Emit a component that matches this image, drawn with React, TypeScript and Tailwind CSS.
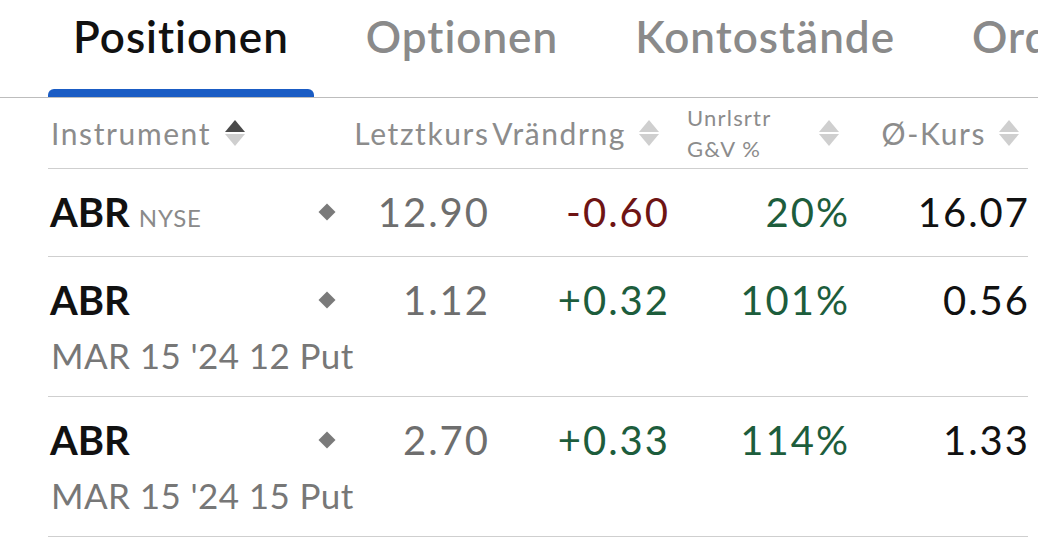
import React from 'react';

type Row = {
  symbol: string;
  exchange?: string;
  detail?: string;
  last: string;
  change: string;
  pnl: string;
  avg: string;
};

const rows: Row[] = [
  { symbol: 'ABR', exchange: 'NYSE', last: '12.90', change: '-0.60', pnl: '20%', avg: '16.07' },
  { symbol: 'ABR', detail: "MAR 15 '24 12 Put", last: '1.12', change: '+0.32', pnl: '101%', avg: '0.56' },
  { symbol: 'ABR', detail: "MAR 15 '24 15 Put", last: '2.70', change: '+0.33', pnl: '114%', avg: '1.33' },
];

const tabs = ['Positionen', 'Optionen', 'Kontostände', 'Orders'];

// Grid: instrument | letztkurs | veränderung | G&V | Ø-Kurs
const cols = 'grid grid-cols-[292px_148px_180px_180px_180px]';

function SortIcon({ active = false }: { active?: boolean }) {
  return (
    <svg width="22" height="30" viewBox="0 0 22 30" className="shrink-0">
      <path d="M11 2 L21 14 L1 14 Z" fill={active ? '#4a4a4a' : '#cfcfcf'} />
      <path d="M1 16 L21 16 L11 28 Z" fill="#cfcfcf" />
    </svg>
  );
}

function Diamond() {
  return <div className="w-[12px] h-[12px] rotate-45 bg-[#7a7a7a]" />;
}

export default function App() {
  return (
    <div className="w-[1038px] h-[548px] bg-white overflow-hidden font-['Lato','Liberation_Sans',sans-serif]">
      {/* tabs */}
      <div className="flex pl-[48px] gap-[27px] whitespace-nowrap border-b border-[#bdbdbd]">
        {tabs.map((t, i) => (
          <div key={t} className="flex flex-col">
            <div
              className={
                'px-[25px] pt-[14px] h-[89px] text-[44px] leading-none font-semibold tracking-[1px] ' +
                (i === 0 ? 'text-[#111]' : 'text-[#8a8a8a]')
              }
            >
              {t}
            </div>
            <div className={'h-[8px] rounded-t-[6px] ' + (i === 0 ? 'bg-[#1a5cc4]' : '')} />
          </div>
        ))}
      </div>

      <div className="pl-[48px] pr-[10px]">
        {/* header */}
        <div className={cols + ' h-[71px] items-center border-b border-[#cfcfcf] text-[30px] tracking-[1.6px] text-[#8c8c8c]'}>
          <div className="flex items-center gap-[13px] pl-[3px]">
            <span>Instrument</span>
            <SortIcon active />
          </div>
          <div className="text-right -mr-[1.6px]">Letztkurs</div>
          <div className="flex items-center justify-end gap-[12px] pr-[8px]">
            <span>Vrändrng</span>
            <SortIcon />
          </div>
          <div className="flex items-center justify-between pl-[19px] pr-[8px]">
            <div className="text-[22px] leading-[31px] tracking-[1.2px]">
              <div>Unrlsrtr</div>
              <div>G&amp;V %</div>
            </div>
            <SortIcon />
          </div>
          <div className="flex items-center justify-end gap-[12px] pr-[8px]">
            <span>Ø-Kurs</span>
            <SortIcon />
          </div>
        </div>

        {/* rows */}
        {rows.map((r, i) => (
          <div
            key={i}
            className={cols + ' border-b border-[#cfcfcf] pt-[21px] ' + (r.detail ? 'pb-[19px]' : 'pb-[22px]')}
          >
            <div className="flex flex-col">
              <div className="h-[44px] flex items-center justify-between pr-[5px]">
                <div className="flex items-baseline pl-[2px]">
                  <span className="text-[40px] font-bold text-[#111]">{r.symbol}</span>
                  {r.exchange && (
                    <span className="ml-[9px] text-[24px] tracking-[0.8px] text-[#8a8a8a]">{r.exchange}</span>
                  )}
                </div>
                <div className="w-[17px] flex justify-center">
                  <Diamond />
                </div>
              </div>
              {r.detail && (
                <div className="mt-[11px] h-[44px] flex items-center pl-[3px] text-[35px] tracking-[0.4px] text-[#777] whitespace-nowrap">
                  {r.detail}
                </div>
              )}
            </div>
            <div className="h-[44px] flex items-center justify-end text-[40px] tracking-[2px] -mr-[2px] text-[#6e6e6e]">
              {r.last}
            </div>
            <div
              className={
                'h-[44px] flex items-center justify-end text-[40px] tracking-[2px] -mr-[2px] ' +
                (r.change.startsWith('-') ? 'text-[#6e1414]' : 'text-[#1d5d3c]')
              }
            >
              {r.change}
            </div>
            <div className="h-[44px] flex items-center justify-end text-[40px] tracking-[2px] -mr-[2px] text-[#1d5d3c]">
              {r.pnl}
            </div>
            <div className="h-[44px] flex items-center justify-end text-[40px] tracking-[2px] -mr-[2px] text-[#111]">
              {r.avg}
            </div>
          </div>
        ))}
      </div>
    </div>
  );
}
